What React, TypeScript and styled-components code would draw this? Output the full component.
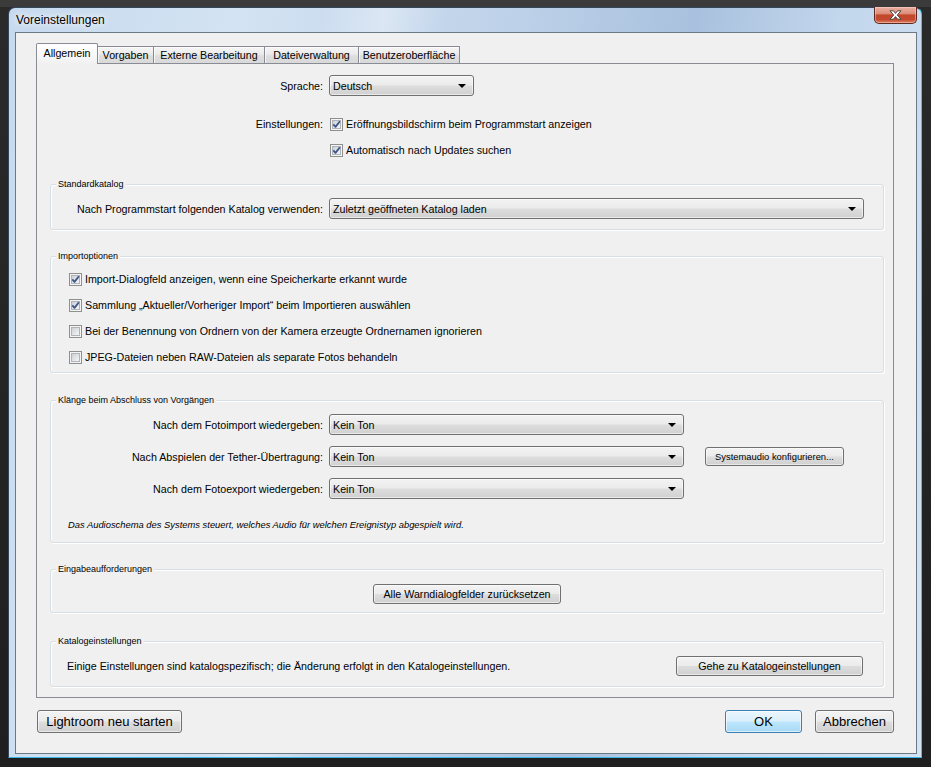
import React from "react";
import styled, { createGlobalStyle, css } from "styled-components";

const GlobalStyle = createGlobalStyle`
  html, body {
    margin: 0;
    padding: 0;
    background: #262626;
  }
  body {
    font-family: "Liberation Sans", Arial, sans-serif;
    color: #000;
  }
  * {
    box-sizing: border-box;
  }
`;

const Desktop = styled.div`
  width: 931px;
  height: 767px;
  padding: 7px 9px 9px 8px;
  background: linear-gradient(#3b3b3b 0, #3b3b3b 7px, #2a2a2a 7px, #1f1f1f 100%);
  overflow: hidden;
`;

const Window = styled.div`
  height: 751px;
  display: flex;
  flex-direction: column;
  border: 1px solid #34465a;
  border-right-color: #3cc4f0;
  border-bottom-color: #3ab6e6;
  border-radius: 7px 7px 0 0;
  padding: 0 4px 3px 6px;
  background:
    linear-gradient(100deg, rgba(255, 255, 255, 0) 30%, rgba(255, 255, 255, 0.35) 36%, rgba(255, 255, 255, 0) 42%),
    linear-gradient(100deg, #c6d9ee 0%, #d3e3f3 22%, #bcd0e8 50%, #a9c1de 66%, #c3d7ed 80%, #d4e4f4 100%);
`;

const TitleBar = styled.div`
  height: 24px;
  display: flex;
  align-items: flex-start;
  justify-content: space-between;
`;

const Title = styled.div`
  padding: 4px 0 0 1px;
  font-size: 12px;
  line-height: 16px;
  text-shadow: 0 0 6px #fff, 0 0 10px #fff;
`;

const CloseButton = styled.div`
  width: 43px;
  height: 17px;
  margin-top: -1px;
  display: flex;
  align-items: center;
  justify-content: center;
  border: 1px solid #5c2a22;
  border-top: none;
  border-radius: 0 0 5px 5px;
  background: linear-gradient(#eab0a2 0%, #dc8d78 42%, #c4472b 50%, #c34a2e 78%, #df7f63 100%);
  box-shadow: inset 0 0 0 1px rgba(255, 220, 210, 0.45);
`;

const Client = styled.div`
  flex: 1;
  display: flex;
  flex-direction: column;
  background: #f0f0f0;
  border: 1px solid #6b7886;
  padding: 10px 22px 20px 20px;
`;

const TabBar = styled.div`
  height: 21px;
  display: flex;
  align-items: flex-end;
  margin-bottom: -1px;
  position: relative;
  z-index: 1;
`;

const Tab = styled.div<{ $w: number; $active?: boolean }>`
  width: ${(p) => p.$w}px;
  margin-left: -1px;
  display: flex;
  align-items: center;
  justify-content: center;
  font-size: 10.7px;
  border: 1px solid #898c95;
  border-bottom: none;
  ${(p) =>
    p.$active
      ? css`
          height: 21px;
          padding-bottom: 3px;
          background: linear-gradient(#ffffff, #f8f8f8 60%, #f0f0f0);
          position: relative;
          z-index: 1;
          border-radius: 2px 2px 0 0;
        `
      : css`
          height: 17px;
          margin-bottom: 1px;
          background: linear-gradient(#f6f6f6, #ebebeb 45%, #dedede 55%, #d9d9d9);
          box-shadow: inset 1px 1px 0 rgba(255, 255, 255, 0.7);
        `}
  &:first-child {
    margin-left: 0;
  }
`;

const Panel = styled.div`
  flex: 1;
  display: flex;
  flex-direction: column;
  border: 1px solid #898c95;
  background: #f0f0f0;
  padding: 11px 9px 10px 13px;
`;

const FormRow = styled.div<{ $mt?: number }>`
  display: flex;
  align-items: center;
  margin-top: ${(p) => p.$mt ?? 0}px;
`;

const RowLabel = styled.div<{ $w: number }>`
  width: ${(p) => p.$w}px;
  margin-right: 6px;
  text-align: right;
  font-size: 10.7px;
  white-space: nowrap;
`;

const face = css`
  border: 1px solid #707070;
  border-radius: 3px;
  background: linear-gradient(#f3f3f3 0%, #ebebeb 48%, #dddddd 52%, #d0d0d0 100%);
  box-shadow: inset 0 0 0 1px rgba(255, 255, 255, 0.55);
`;

const SelectBox = styled.div<{ $w: number }>`
  ${face}
  width: ${(p) => p.$w}px;
  height: 21px;
  display: flex;
  align-items: center;
  justify-content: space-between;
  padding: 0 7px 0 3px;
  font-size: 10.7px;
`;

const Arrow = styled.span`
  width: 0;
  height: 0;
  border-left: 4px solid transparent;
  border-right: 4px solid transparent;
  border-top: 4px solid #000;
`;

const Button = styled.div<{ $w: number; $h?: number; $fs?: number; $ml?: number; $default?: boolean }>`
  ${face}
  width: ${(p) => p.$w}px;
  height: ${(p) => p.$h ?? 20}px;
  margin-left: ${(p) => p.$ml ?? 0}px;
  display: flex;
  align-items: center;
  justify-content: center;
  font-size: ${(p) => p.$fs ?? 10.7}px;
  white-space: nowrap;
  ${(p) =>
    p.$default &&
    css`
      border-color: #3c7fb1;
      background: linear-gradient(#eaf6fd 0%, #d9f0fc 48%, #bee6fd 52%, #a7d9f5 100%);
      box-shadow: inset 0 0 0 1px rgba(255, 255, 255, 0.6);
    `}
`;

const CheckRow = styled.div<{ $mt?: number; $ml?: number }>`
  height: 16px;
  display: flex;
  align-items: center;
  margin-top: ${(p) => p.$mt ?? 0}px;
  margin-left: ${(p) => p.$ml ?? 0}px;
  font-size: 10.7px;
  white-space: nowrap;
`;

const CheckSvg = styled.svg`
  flex: none;
  margin-right: 3px;
`;

const Group = styled.fieldset<{ $mt: number }>`
  margin: ${(p) => p.$mt}px 0 0 0;
  padding: 0;
  min-width: 0;
  border: 1px solid #d5dfe5;
  border-radius: 3px;
  box-shadow: inset 1px 1px 0 #fff, 1px 1px 0 #fff;
`;

const Legend = styled.legend`
  margin-left: 5px;
  padding: 0 2px;
  font-size: 9px;
  line-height: 12px;
  background: #f0f0f0;
`;

const GroupBody = styled.div<{ $pad: string }>`
  display: flex;
  flex-direction: column;
  padding: ${(p) => p.$pad};
`;

const Note = styled.div`
  margin-top: 20px;
  font-size: 9.4px;
  font-style: italic;
  line-height: 12px;
  white-space: nowrap;
`;

const SplitRow = styled.div<{ $center?: boolean }>`
  display: flex;
  align-items: center;
  justify-content: ${(p) => (p.$center ? "center" : "space-between")};
  font-size: 10.7px;
`;

const Footer = styled.div`
  margin-top: 12px;
  padding-left: 1px;
  display: flex;
  justify-content: space-between;
`;

const FooterRight = styled.div`
  display: flex;
  gap: 13px;
`;

const CheckBox = ({ checked }: { checked: boolean }) => (
  <CheckSvg width="13" height="13" viewBox="0 0 13 13">
    <defs>
      <linearGradient id="cbfill" x1="0" y1="0" x2="1" y2="1">
        <stop offset="0" stopColor="#c9ced5" />
        <stop offset="1" stopColor="#f8f8f8" />
      </linearGradient>
    </defs>
    <rect x="0.5" y="0.5" width="12" height="12" fill="#f5f5f5" stroke="#8e8f8f" />
    <rect x="2.5" y="2.5" width="8" height="8" fill="url(#cbfill)" stroke="#afb4ba" />
    {checked && (
      <path d="M3.3 6.3 L5.5 8.9 L9.9 3.2" fill="none" stroke="#3f5689" strokeWidth="1.8" strokeLinejoin="round" />
    )}
  </CheckSvg>
);

const Select = ({ w, value }: { w: number; value: string }) => (
  <SelectBox $w={w}>
    <span>{value}</span>
    <Arrow />
  </SelectBox>
);

const tabs = [
  { label: "Allgemein", w: 62 },
  { label: "Vorgaben", w: 57 },
  { label: "Externe Bearbeitung", w: 112 },
  { label: "Dateiverwaltung", w: 95 },
  { label: "Benutzeroberfläche", w: 102 },
];

const App = () => {
  return (
    <>
      <GlobalStyle />
      <Desktop>
        <Window>
          <TitleBar>
            <Title>Voreinstellungen</Title>
            <CloseButton>
              <svg width="13" height="10" viewBox="0 0 13 10">
                <path
                  d="M1 0.8 H4.4 L6.5 3.4 L8.6 0.8 H12 L8.3 5 L12 9.2 H8.6 L6.5 6.6 L4.4 9.2 H1 L4.7 5 Z"
                  fill="#fff"
                  stroke="#3c3c3c"
                  strokeWidth="0.9"
                  strokeLinejoin="round"
                />
              </svg>
            </CloseButton>
          </TitleBar>
          <Client>
            <TabBar>
              {tabs.map((t, i) => (
                <Tab key={t.label} $w={t.w} $active={i === 0}>
                  {t.label}
                </Tab>
              ))}
            </TabBar>
            <Panel>
              <FormRow>
                <RowLabel $w={273}>Sprache:</RowLabel>
                <Select w={145} value="Deutsch" />
              </FormRow>
              <FormRow $mt={20}>
                <RowLabel $w={273}>Einstellungen:</RowLabel>
                <CheckRow $ml={1}>
                  <CheckBox checked />
                  Eröffnungsbildschirm beim Programmstart anzeigen
                </CheckRow>
              </FormRow>
              <CheckRow $mt={10} $ml={280}>
                <CheckBox checked />
                Automatisch nach Updates suchen
              </CheckRow>

              <Group $mt={20}>
                <Legend>Standardkatalog</Legend>
                <GroupBody $pad="8px 0 10px 0">
                  <FormRow>
                    <RowLabel $w={272}>Nach Programmstart folgenden Katalog verwenden:</RowLabel>
                    <Select w={535} value="Zuletzt geöffneten Katalog laden" />
                  </FormRow>
                </GroupBody>
              </Group>

              <Group $mt={20}>
                <Legend>Importoptionen</Legend>
                <GroupBody $pad="9px 0 7px 18px">
                  <CheckRow>
                    <CheckBox checked />
                    Import-Dialogfeld anzeigen, wenn eine Speicherkarte erkannt wurde
                  </CheckRow>
                  <CheckRow $mt={10}>
                    <CheckBox checked />
                    Sammlung „Aktueller/Vorheriger Import“ beim Importieren auswählen
                  </CheckRow>
                  <CheckRow $mt={10}>
                    <CheckBox checked={false} />
                    Bei der Benennung von Ordnern von der Kamera erzeugte Ordnernamen ignorieren
                  </CheckRow>
                  <CheckRow $mt={10}>
                    <CheckBox checked={false} />
                    JPEG-Dateien neben RAW-Dateien als separate Fotos behandeln
                  </CheckRow>
                </GroupBody>
              </Group>

              <Group $mt={21}>
                <Legend>Klänge beim Abschluss von Vorgängen</Legend>
                <GroupBody $pad="8px 0 11px 17px">
                  <FormRow>
                    <RowLabel $w={255}>Nach dem Fotoimport wiedergeben:</RowLabel>
                    <Select w={355} value="Kein Ton" />
                  </FormRow>
                  <FormRow $mt={11}>
                    <RowLabel $w={255}>Nach Abspielen der Tether-Übertragung:</RowLabel>
                    <Select w={355} value="Kein Ton" />
                    <Button $w={139} $h={19} $fs={9.4} $ml={21}>
                      Systemaudio konfigurieren...
                    </Button>
                  </FormRow>
                  <FormRow $mt={11}>
                    <RowLabel $w={255}>Nach dem Fotoexport wiedergeben:</RowLabel>
                    <Select w={355} value="Kein Ton" />
                  </FormRow>
                  <Note>Das Audioschema des Systems steuert, welches Audio für welchen Ereignistyp abgespielt wird.</Note>
                </GroupBody>
              </Group>

              <Group $mt={20}>
                <Legend>Eingabeaufforderungen</Legend>
                <GroupBody $pad="9px 0 8px 0">
                  <SplitRow $center>
                    <Button $w={188}>Alle Warndialogfelder zurücksetzen</Button>
                  </SplitRow>
                </GroupBody>
              </Group>

              <Group $mt={22}>
                <Legend>Katalogeinstellungen</Legend>
                <GroupBody $pad="9px 20px 10px 16px">
                  <SplitRow>
                    <span>Einige Einstellungen sind katalogspezifisch; die Änderung erfolgt in den Katalogeinstellungen.</span>
                    <Button $w={187}>Gehe zu Katalogeinstellungen</Button>
                  </SplitRow>
                </GroupBody>
              </Group>
            </Panel>
            <Footer>
              <Button $w={145} $h={23} $fs={13}>
                Lightroom neu starten
              </Button>
              <FooterRight>
                <Button $w={77} $h={23} $fs={13} $default>
                  OK
                </Button>
                <Button $w={79} $h={23} $fs={13}>
                  Abbrechen
                </Button>
              </FooterRight>
            </Footer>
          </Client>
        </Window>
      </Desktop>
    </>
  );
};

export default App;
